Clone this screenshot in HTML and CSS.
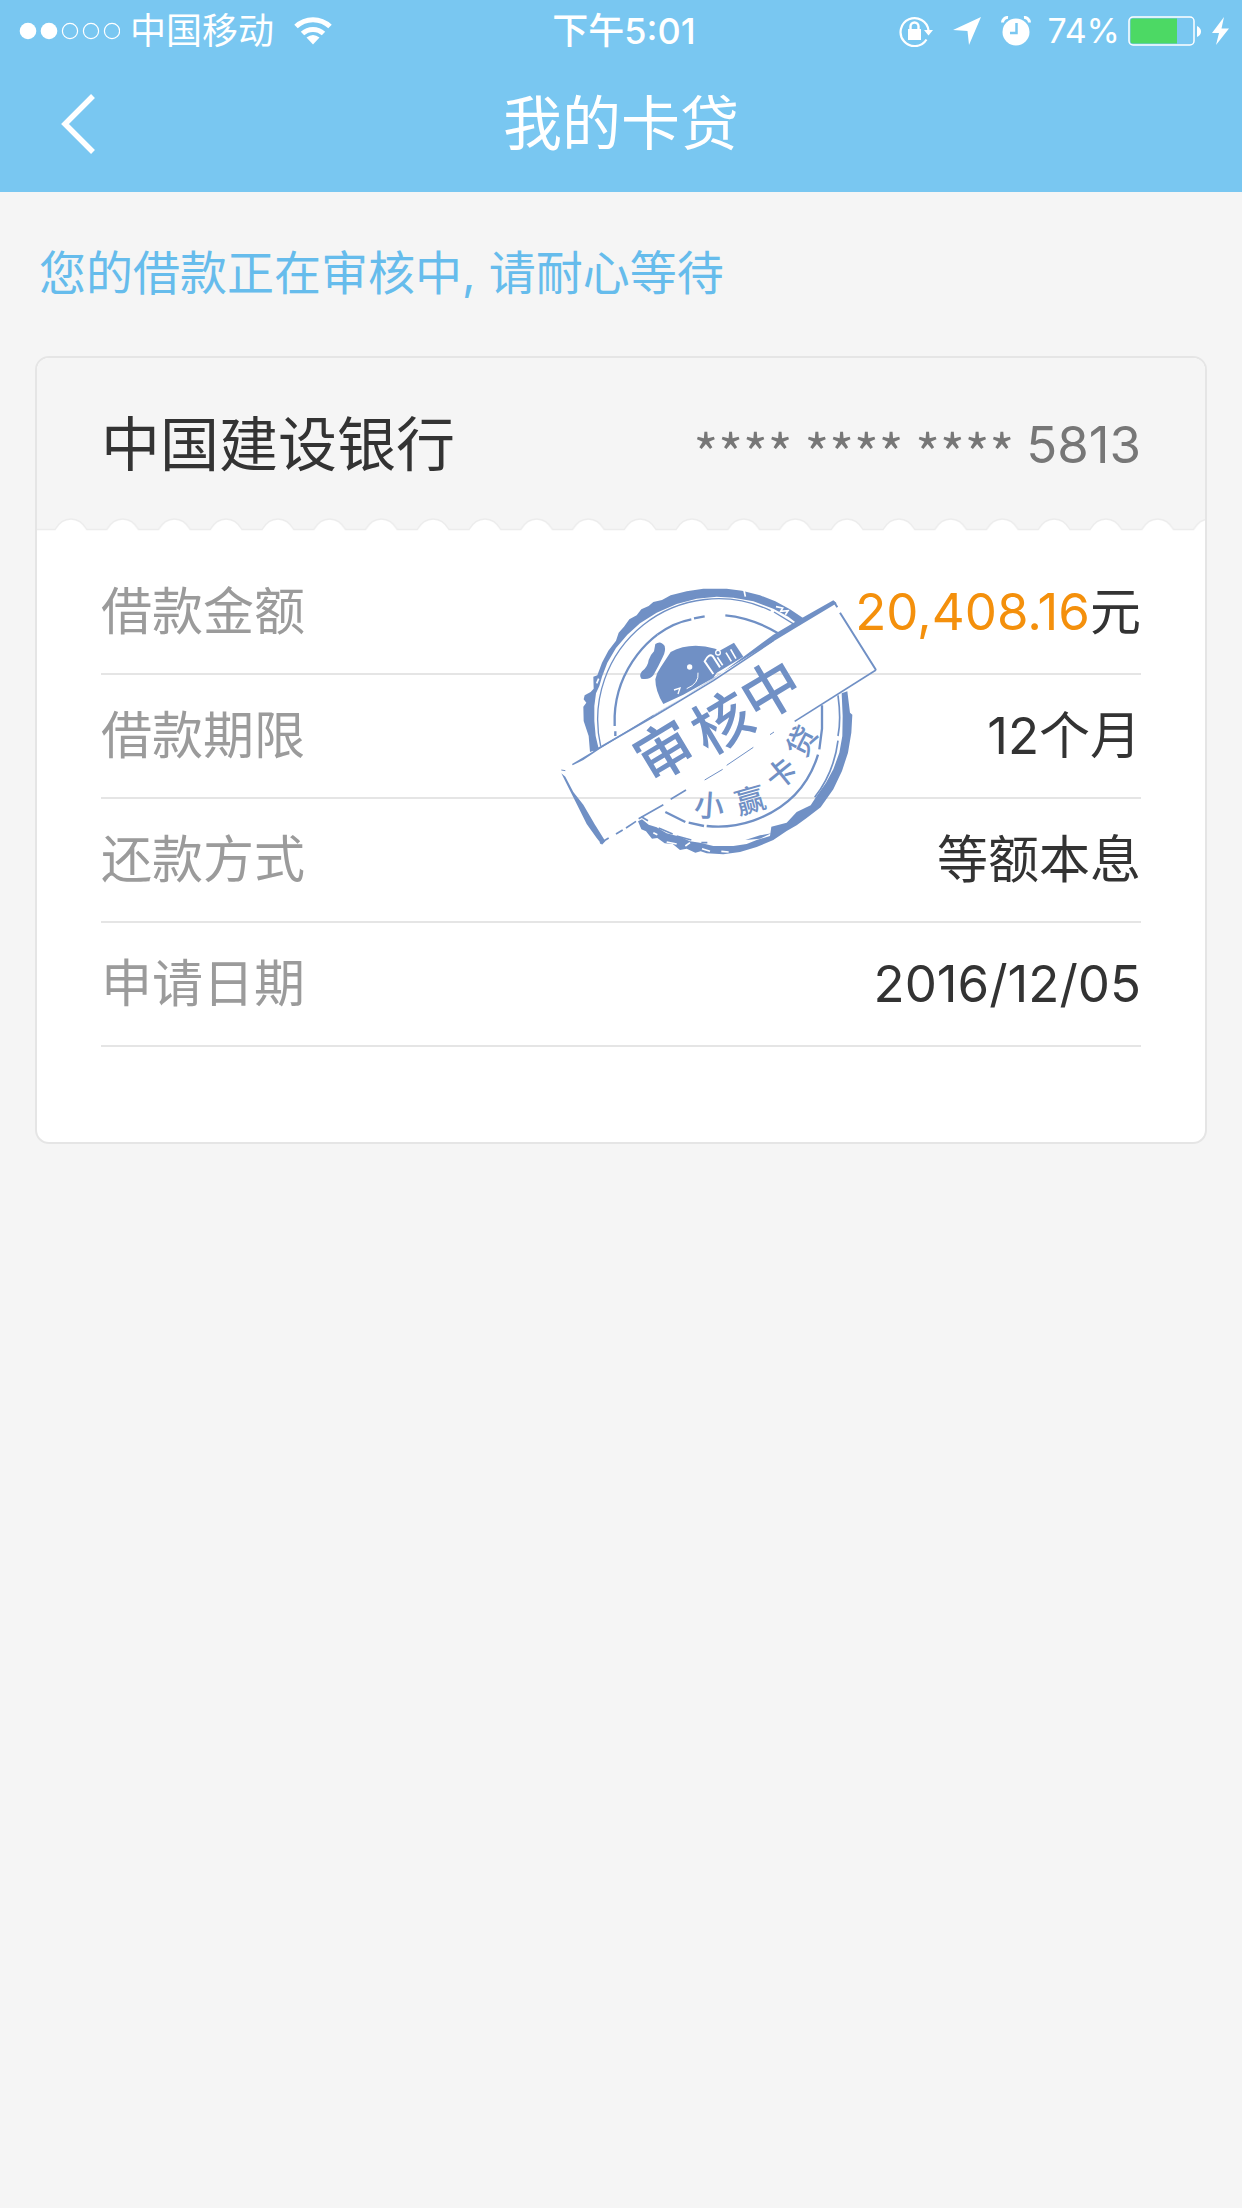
FILE: index.html
```
<!DOCTYPE html>
<html lang="zh-CN">
<head>
  <meta charset="UTF-8">
  <meta name="viewport" content="width=device-width, initial-scale=1.0">
  <title>我的卡贷</title>
  <link rel="stylesheet" href="styles.css">
</head>
<body>

  <header class="header">
    <div class="status-bar">
      <div class="status-left">
        <svg class="signal" width="101" height="18" viewBox="0 0 101 18">
          <g fill="#fff">
            <circle cx="9" cy="9" r="8.3"/>
            <circle cx="30" cy="9" r="8.3"/>
          </g>
          <g fill="none" stroke="#fff" stroke-width="1.2">
            <circle cx="51" cy="9" r="7.6"/>
            <circle cx="72" cy="9" r="7.6"/>
            <circle cx="93" cy="9" r="7.6"/>
          </g>
        </svg>
        <span class="carrier">中国移动</span>
        <svg class="wifi" width="38" height="28" viewBox="0 0 38 28">
          <g fill="none" stroke="#fff" stroke-width="5">
            <path d="M2 9.500A24.500 24.500 0 0 1 36 9.500"/>
            <path d="M8.500 16.500A15.500 15.500 0 0 1 29.500 16.500"/>
          </g>
          <path d="M12.500 20.500Q19 15.500 25.500 20.500L19 27.500Z" fill="#fff"/>
        </svg>
      </div>
      <span class="time">下午5:01</span>
      <div class="status-right">
        <svg class="lock" width="34" height="32" viewBox="0 0 34 32">
          <path d="M27.500 24.500A14 14 0 1 1 29.500 15.500" fill="none" stroke="#fff" stroke-width="2.2"/>
          <path d="M25 15H34L29.500 20.500Z" fill="#fff"/>
          <path d="M9 14H22V25H9Z" fill="#fff"/>
          <path d="M11.500 15V11.500A4 4 0 0 1 19.500 11.500V15" fill="none" stroke="#fff" stroke-width="2.400"/>
        </svg>
        <svg class="location" width="28" height="28" viewBox="0 0 28 28">
          <path d="M28 0L16 28L14.500 14L0 13Z" fill="#fff"/>
        </svg>
        <svg class="alarm" width="30" height="30" viewBox="0 0 30 30">
          <circle cx="15" cy="16" r="13.500" fill="#fff"/>
          <path d="M1.500 6.500A5 5 0 0 1 7 1.500M23 1.500A5 5 0 0 1 28.500 6.500" fill="none" stroke="#fff" stroke-width="3"/>
          <path d="M15.500 7V17H9" fill="none" stroke="#79c7f1" stroke-width="2.500"/>
        </svg>
        <span class="percent">74%</span>
        <svg class="battery" width="74" height="30" viewBox="0 0 74 30">
          <rect x="1" y="1" width="65" height="28" rx="4" fill="none" stroke="#fff" stroke-width="1.500"/>
          <path d="M5 2.500H49V27.500H5A2.500 2.500 0 0 1 2.500 25V5A2.500 2.500 0 0 1 5 2.500Z" fill="#4cd964"/>
          <path d="M69 10Q73 12 73 15.500T69 21Z" fill="#fff"/>
        </svg>
        <svg class="bolt" width="17" height="28" viewBox="0 0 17 28">
          <path d="M12 0L0 16H7L4 28L17 11.500H9.500Z" fill="#fff"/>
        </svg>
      </div>
    </div>
    <div class="nav-bar">
      <button class="back" type="button" aria-label="返回">
        <svg width="36" height="62" viewBox="0 0 36 62">
          <path d="M33 3L5 31L33 59" fill="none" stroke="#fff" stroke-width="5.500"/>
        </svg>
      </button>
      <h1 class="title">我的卡贷</h1>
    </div>
  </header>

  <main class="content">
    <p class="notice">您的借款正在审核中, 请耐心等待</p>

    <section class="card">
      <div class="card-head">
        <h2 class="bank">中国建设银行</h2>
        <p class="card-no"><span class="mask">**** **** **** </span>5813</p>
        <svg class="scallop" width="100%" height="13">
          <defs>
            <pattern id="wave" x="8" width="51.75" height="13" patternUnits="userSpaceOnUse">
              <path d="M0 13V11.500H10Q16 1 25.900 1T41.800 11.500H51.750V13Z" fill="#fff"/>
              <path d="M0 11.500H10Q16 1 25.900 1T41.800 11.500H51.750" fill="none" stroke="#ececec" stroke-width="1.500"/>
            </pattern>
          </defs>
          <rect width="100%" height="13" fill="url(#wave)"/>
        </svg>
      </div>

      <dl class="details">
        <div class="row">
          <dt>借款金额</dt>
          <dd><span class="amount">20,408.16</span>元</dd>
        </div>
        <div class="row">
          <dt>借款期限</dt>
          <dd>12个月</dd>
        </div>
        <div class="row">
          <dt>还款方式</dt>
          <dd>等额本息</dd>
        </div>
        <div class="row">
          <dt>申请日期</dt>
          <dd>2016/12/05</dd>
        </div>
      </dl>

      <!-- 审核中印章 -->
      <svg class="stamp" width="320" height="270" viewBox="60 50 960 810">
        <g fill="#7090c5">
          <!-- outer ring, upper half -->
          <path d="M150 548L146 500L131 455L130 412L139 400L131 390L134 378L152 368L161 358L160 322L172 318L186 280L205 244L228 214L236 190L252 172L268 150L290 138L304 120L326 110L340 98L366 92L392 78L440 66L490 58H560L606 64L660 78L706 96L750 120L798 152L778 168L745 142L700 118L640 96L580 85L530 82L470 88L410 104L350 130L300 162L262 196L228 236L202 280L186 322L178 350L168 372L163 410V455L167 500L176 538Z"/>
          <!-- outer ring, lower half -->
          <path d="M905 372L922 366L930 430L937 436L934 490L924 550L906 605L880 660L842 714L800 746L770 768L740 785L700 812L650 833L600 848L550 855L500 852L482 846L466 850L440 838L420 842L398 824L374 822L352 806L336 808L318 786L304 780L294 756L306 750L326 766L350 774L380 792L420 802L450 816L480 820L520 830L580 830L620 824L650 812L690 800L694 772L740 760L770 728L812 708L830 680L858 640L880 600L898 550L907 500L908 440Z"/>
          <path d="M616 812L660 798L694 792L660 808Z"/>
          <!-- banner -->
          <path d="M96 584L120 570L160 546L340 436L520 330L700 196L770 155L880 93L890 102L770 174L640 252L520 326L340 440L180 538L130 572L98 588Z"/>
          <path d="M64 612L76 622L100 668L130 706L165 766L196 816L186 826L170 806L140 764L112 708L86 656Z"/>
          <!-- ear and head -->
          <path d="M346 224Q362 212 374 230Q378 246 368 264Q356 290 340 318Q330 332 304 328Q296 318 306 306Q324 292 326 272Q330 258 342 246Z"/>
          <path d="M392 248Q450 216 526 238L560 262L520 326L430 376L370 404Q346 366 346 330Q350 310 362 294Z"/>
          <path d="M490 284L528 250L582 220L610 262L528 312L480 336Z"/>
        </g>
        <g fill="none" stroke="#fff">
          <path d="M520 314L494 276Q506 252 518 260L540 294" stroke-width="6"/>
          <path d="M532 264L548 288M558 250L574 276M572 240L588 268" stroke-width="5"/>
          <circle cx="534" cy="250" r="7" stroke-width="4"/>
          <path d="M474 310Q478 342 440 358" stroke-width="3"/>
          <path d="M402 362L420 356L414 374" stroke-width="4"/>
          <path d="M176 328L170 342M612 62L616 82M708 112L728 116L722 126L744 124L736 136" stroke-width="5"/>
          <path d="M380 818L410 824M436 830L450 820M486 838L510 846M544 846L566 848M340 790L352 796" stroke-width="5"/>
          <path d="M340 437L520 328L640 254" stroke-width="2"/>
        </g>
        <circle cx="449" cy="293" r="8" fill="#fff"/>
        <g fill="none" stroke="#7090c5">
          <path d="M182 530A362 362 0 0 1 692 124" stroke-width="4"/>
          <path d="M702 128L764 166" stroke-width="4"/>
          <path d="M894 378Q904 450 894 500M894 514Q882 610 824 684" stroke-width="5"/>
          <path d="M304 742L324 754M356 776L398 794M410 800L454 812M484 820H502" stroke-width="5"/>
          <path d="M226 500V486M224 470V440Q228 340 292 256Q318 222 352 196" stroke-width="7"/>
          <path d="M352 196Q400 160 454 150M462 147L494 141M556 138Q640 146 718 194" stroke-width="7"/>
          <path d="M846 408V478L838 540M834 556Q790 700 640 754Q570 778 500 770" stroke-width="7"/>
          <path d="M376 728L436 758M446 760L492 770" stroke-width="7"/>
          <path d="M160 546L340 442L520 334L700 214" stroke-width="5"/>
          <path d="M882 98L892 114M900 130L1008 302" stroke-width="6"/>
          <path d="M1008 302L764 456" stroke-width="5"/>
          <path d="M438 662L392 690M370 706L296 748M288 756L258 776M248 782L228 794M206 806L180 822" stroke-width="5"/>
          <path d="M494 632L548 600M560 588L640 534M690 496L702 488" stroke-width="3"/>
          <path d="M64 602L76 604" stroke-width="3"/>
        </g>
        <g class="stamp-main">
          <text transform="translate(373 545) rotate(-31)" dy="65">审</text>
          <text transform="translate(546 460) rotate(-31)" dy="65">核</text>
          <text transform="translate(692 362) rotate(-31)" dy="65">中</text>
        </g>
        <g class="stamp-sub">
          <text transform="translate(508 708) rotate(4)" dy="34">小</text>
          <text transform="translate(630 692) rotate(-16)" dy="34">赢</text>
          <text transform="translate(723 612) rotate(-39)" dy="34">卡</text>
          <text transform="translate(784 515) rotate(-63)" dy="34">贷</text>
        </g>
      </svg>
    </section>
  </main>

</body>
</html>
```
FILE: styles.css
```
:root {
  --primary: #79c7f1;
  --notice: #66bcec;
  --bg: #f5f5f5;
  --line: #e5e5e5;
  --text: #333333;
  --label: #9b9b9b;
  --muted: #777777;
  --amount: #f4900c;
  --stamp: #7090c5;
}

* {
  box-sizing: border-box;
  margin: 0;
  padding: 0;
}

body {
  background: var(--bg);
  color: var(--text);
  font-family: Inter, "Noto Sans CJK SC", sans-serif;
  font-size: 51px;
  min-height: 100vh;
}

.header {
  background: var(--primary);
  color: #fff;
}

.status-bar {
  display: grid;
  grid-template-columns: 1fr auto 1fr;
  align-items: center;
  height: 62px;
  padding: 0 13px 0 19px;
  font-size: 36px;
  line-height: 62px;
}

.status-left,
.status-right {
  display: flex;
  align-items: center;
}

.carrier {
  margin: 0 20px 0 10px;
}

.status-right {
  justify-content: flex-end;
}

.time {
  font-weight: 500;
}

.location,
.alarm {
  margin-left: 20px;
}

.percent {
  font-size: 34px;
  margin: 0 8px 0 16px;
}

.bolt {
  margin-left: 10px;
}

.nav-bar {
  position: relative;
  display: flex;
  align-items: flex-start;
  justify-content: center;
  height: 130px;
}

.back {
  position: absolute;
  left: 30px;
  top: 0;
  width: 96px;
  height: 124px;
  background: none;
  border: 0;
  cursor: pointer;
}

.back svg {
  display: block;
  margin-left: 30px;
}

.title {
  font-size: 59px;
  font-weight: 400;
  line-height: 124px;
}

.content {
  padding: 45px 35px;
}

.notice {
  padding-left: 4px;
  color: var(--notice);
  font-size: 47px;
  line-height: 72px;
}

.card {
  position: relative;
  margin-top: 47px;
  padding-bottom: 95px;
  background: #fff;
  border: 2px solid var(--line);
  border-radius: 14px;
}

.card-head {
  position: relative;
  display: flex;
  align-items: center;
  justify-content: space-between;
  height: 173px;
  padding: 0 64px;
  background: var(--bg);
  border-radius: 12px 12px 0 0;
  line-height: 80px;
}

.bank {
  font-size: 59px;
  font-weight: 400;
}

.card-no {
  color: var(--muted);
}

.mask {
  font-family: "Noto Sans CJK SC", sans-serif;
  font-size: 53px;
  line-height: 1;
  vertical-align: sub;
}

.scallop {
  position: absolute;
  left: 0;
  bottom: 0;
}

.details {
  margin: 20px 64px 0;
}

.row {
  display: flex;
  align-items: center;
  justify-content: space-between;
  height: 124px;
  border-bottom: 2px solid var(--line);
  line-height: 80px;
}

.row dt {
  color: var(--label);
}

.amount {
  color: var(--amount);
}

.stamp {
  position: absolute;
  left: 523px;
  top: 228px;
}

.stamp text {
  fill: var(--stamp);
  font-family: "Noto Sans CJK SC", sans-serif;
  font-weight: 500;
  text-anchor: middle;
}

.stamp-main {
  font-size: 176px;
}

.stamp-sub {
  font-size: 90px;
}
```
